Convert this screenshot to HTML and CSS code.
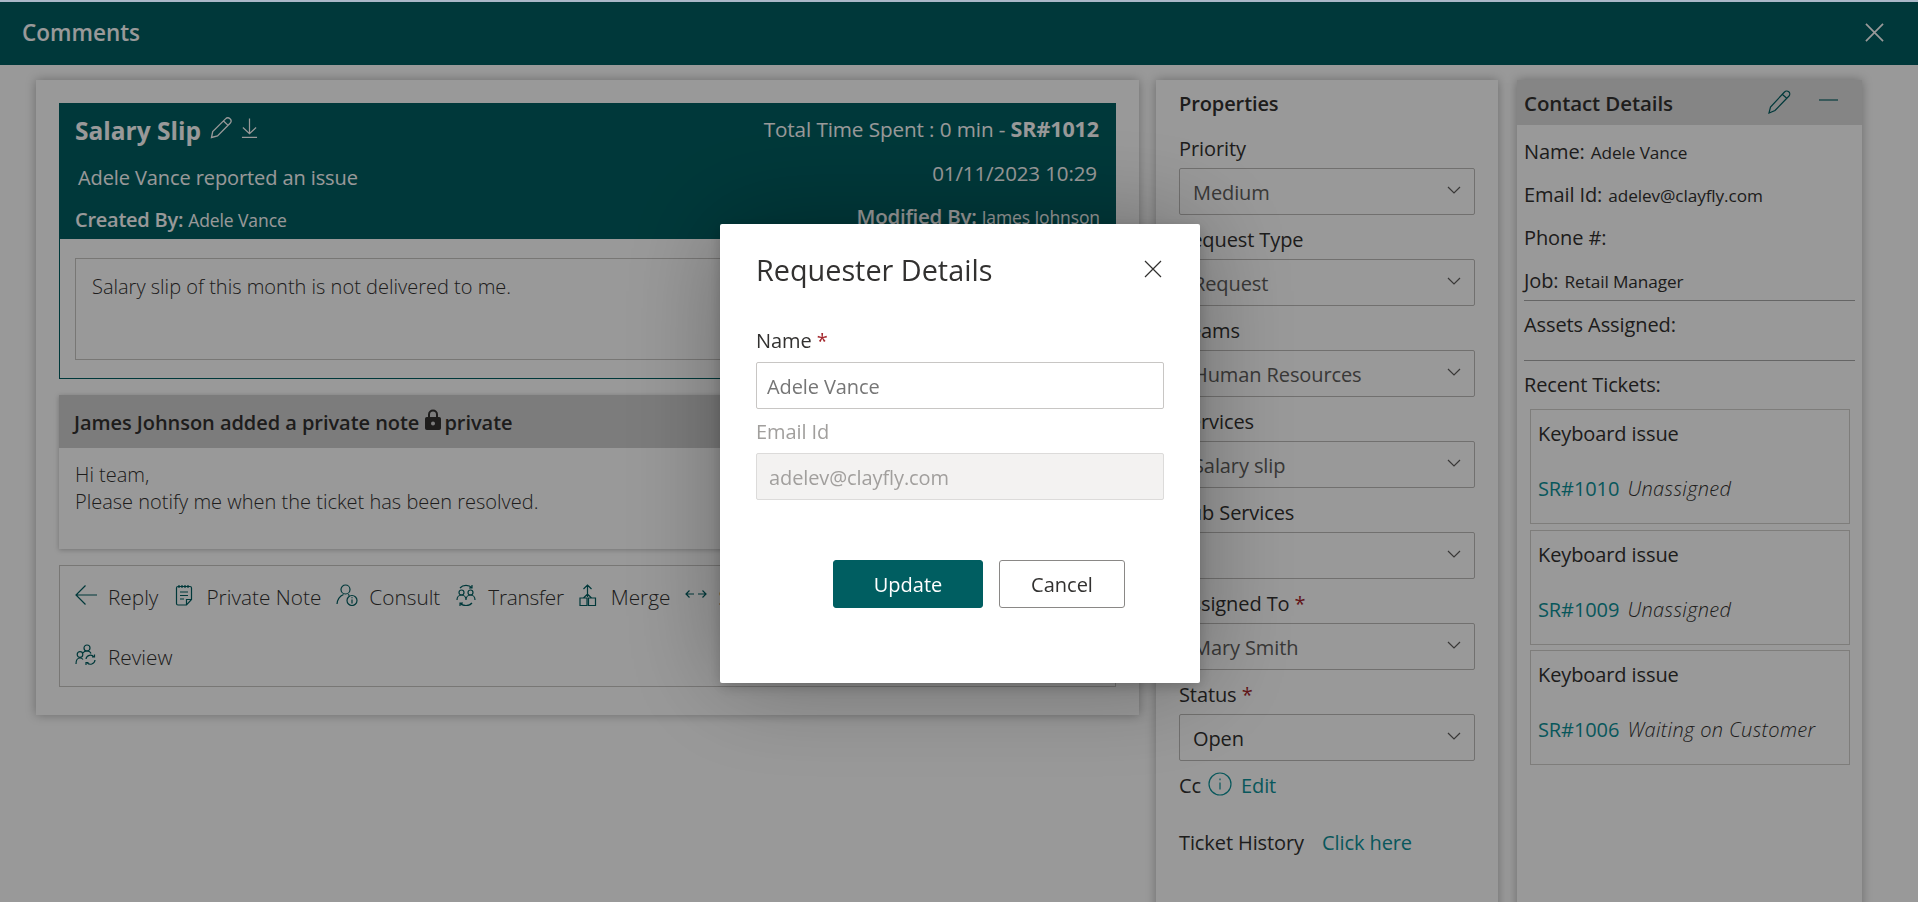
FILE: index.html
```html
<!DOCTYPE html>
<html>
<head>
    <meta charset="utf-8">
    <link rel="stylesheet" href="styles.css">
    <title>Comments</title>
</head>
<body>
    <div class="top-strip"></div>
    <header class="page-header">
        <span class="page-title">Comments</span>
        <svg class="page-close" viewBox="0 0 20 20"><path d="M1 1l18 18M19 1L1 19"/></svg>
    </header>

    <main class="page-main">
        <section class="ticket-card">
            <div class="ticket-head">
                <div class="ticket-row ticket-row-title">
                    <div class="ticket-name">
                        <strong>Salary Slip</strong>
                        <svg class="head-icon" viewBox="0 0 22 22"><path d="M1.500 20.500l1.200-6L15.500 1.900a2.800 2.800 0 0 1 4.600 4.400L7.500 19z M13.500 4l4.600 4.400"/></svg>
                        <svg class="head-icon head-icon-down" viewBox="0 0 18 22"><path d="M9 1v16M2 10.500L9 17l7-6.500M1 21h16"/></svg>
                    </div>
                    <div class="ticket-time">Total Time Spent : 0 min - <strong>SR#1012</strong></div>
                </div>
                <div class="ticket-row ticket-row-sub">
                    <span class="ticket-reported">Adele Vance reported an issue</span>
                    <span class="ticket-date">01/11/2023 10:29</span>
                </div>
                <div class="ticket-row ticket-row-by">
                    <span class="ticket-created"><b>Created By:</b> <small>Adele Vance</small></span>
                    <span class="ticket-modified"><b>Modified By:</b> <small>James Johnson</small></span>
                </div>
            </div>
            <div class="ticket-body">
                <div class="ticket-message">Salary slip of this month is not delivered to me.</div>
            </div>

            <div class="note">
                <div class="note-head">James Johnson added a private note <svg class="note-lock" viewBox="0 0 16 21"><path d="M3 8V5.500a5 5 0 0 1 10 0V8h1.200A1.800 1.800 0 0 1 16 9.800v9.400a1.800 1.800 0 0 1-1.800 1.800H1.800A1.800 1.800 0 0 1 0 19.200V9.800A1.800 1.800 0 0 1 1.800 8zm2 0h6V5.500a3 3 0 0 0-6 0zm3 4.500a2 2 0 1 0 0 4 2 2 0 0 0 0-4z" fill-rule="evenodd"/></svg>private</div>
                <div class="note-body">Hi team,<br>Please notify me when the ticket has been resolved.</div>
            </div>

            <div class="actions">
                <div class="action-row">
                    <span class="action">
                        <svg class="action-icon" viewBox="0 0 22 22"><path d="M1 11h21M10.500 1.500L1 11l9.500 9.500"/></svg>Reply
                    </span>
                    <span class="action">
                        <svg class="action-icon" viewBox="0 0 22 22"><path d="M5 2.500h12a1.500 1.500 0 0 1 1.500 1.500v11.500l-5 5.500H5a1.500 1.500 0 0 1-1.500-1.500V4A1.500 1.500 0 0 1 5 2.500zM6 1v3M9 1v3M12 1v3M15 1v3M7 8h8M7 11.500h8M7 15h4M18.500 15.500h-5v5.500"/></svg>Private Note
                    </span>
                    <span class="action">
                        <svg class="action-icon" viewBox="0 0 22 22"><circle cx="9.500" cy="5.500" r="4.500"/><path d="M1 20c.5-5 3-8 6.500-9.500M12 10.500l1.500 1"/><circle cx="16" cy="16.500" r="5"/><path d="M16 15.500v4M16 13.200v1"/></svg>Consult
                    </span>
                    <span class="action action-tight">
                        <svg class="action-icon" viewBox="0 0 22 22"><circle cx="6.500" cy="8.500" r="2.500"/><circle cx="15.500" cy="8.500" r="2.500"/><path d="M2 16c0-3 2-5 4.500-5s4.500 2 4.500 5M11 16c0-3 2-5 4.500-5s4.500 2 4.500 5M5 4c3-3.500 9-3.500 12 0M17 1v3h-3M17 19c-3 3.500-9 3.500-12 0M5 22v-3h3"/></svg>Transfer
                    </span>
                    <span class="action">
                        <svg class="action-icon" viewBox="0 0 22 22"><path d="M9.500 1v12M5.500 5l4-4 4 4M2 14h7v7.500H2zM10.500 14h7v7.500h-7zM5.500 14l4-4 4 4"/></svg>Merge
                    </span>
                    <span class="action">
                        <svg class="action-icon" viewBox="0 0 22 22"><path d="M1 10h8M4.500 6.500L1 10l3.500 3.500M13 10h8M17.500 6.500L21 10l-3.500 3.500"/></svg>Split
                    </span>
                </div>
                <div class="action-row">
                    <span class="action">
                        <svg class="action-icon" viewBox="0 0 22 22"><circle cx="12" cy="4" r="3"/><circle cx="5" cy="10.500" r="2.800"/><path d="M1 20c0-3.500 1.500-6 4-6 1.500 0 2.500.7 3 1.500M8 9c.5-1 2-2 4-2s3.500 1 4 2.500M20 16a4.500 4.500 0 0 1-8 2.500M11 15a4.500 4.500 0 0 1 8-2M19.500 10.500V13H17M11 21v-2.500h2.500"/></svg>Review
                    </span>
                </div>
            </div>
        </section>

        <aside class="properties">
            <h3 class="panel-title">Properties</h3>
            <div class="field-label">Priority</div>
            <div class="select">Medium<svg class="chevron" viewBox="0 0 14 8"><path d="M1 1l6 6 6-6"/></svg></div>
            <div class="field-label">Request Type</div>
            <div class="select">Request<svg class="chevron" viewBox="0 0 14 8"><path d="M1 1l6 6 6-6"/></svg></div>
            <div class="field-label">Teams</div>
            <div class="select">Human Resources<svg class="chevron" viewBox="0 0 14 8"><path d="M1 1l6 6 6-6"/></svg></div>
            <div class="field-label">Services</div>
            <div class="select">Salary slip<svg class="chevron" viewBox="0 0 14 8"><path d="M1 1l6 6 6-6"/></svg></div>
            <div class="field-label">Sub Services</div>
            <div class="select"><svg class="chevron" viewBox="0 0 14 8"><path d="M1 1l6 6 6-6"/></svg></div>
            <div class="field-label">Assigned To <span class="required">*</span></div>
            <div class="select">Mary Smith<svg class="chevron" viewBox="0 0 14 8"><path d="M1 1l6 6 6-6"/></svg></div>
            <div class="field-label">Status <span class="required">*</span></div>
            <div class="select select-dark">Open<svg class="chevron" viewBox="0 0 14 8"><path d="M1 1l6 6 6-6"/></svg></div>
            <div class="cc-row">
                Cc
                <svg class="cc-info" viewBox="0 0 24 24"><circle cx="12" cy="12" r="11"/><path d="M12 10.500v7M12 6.500v1.800"/></svg>
                <a class="link">Edit</a>
            </div>
            <div class="history-row">Ticket History <a class="link">Click here</a></div>
        </aside>

        <aside class="contact">
            <div class="contact-head">
                <span>Contact Details</span>
                <svg class="contact-edit" viewBox="0 0 24 24"><path d="M2 23l1.500-6L17.500 2a2.800 2.800 0 0 1 4.500 4L8 20.500z M15.500 4.500l4.500 4"/></svg>
                <svg class="contact-min" viewBox="0 0 20 2"><path d="M0 1h20"/></svg>
            </div>
            <div class="contact-list">
                <div class="contact-row"><b>Name:</b> <small>Adele Vance</small></div>
                <div class="contact-row"><b>Email Id:</b> <small>adelev@clayfly.com</small></div>
                <div class="contact-row"><b>Phone #:</b></div>
                <div class="contact-row contact-row-last"><b>Job:</b> <small>Retail Manager</small></div>
            </div>
            <div class="contact-block contact-assets"><b>Assets Assigned:</b></div>
            <div class="contact-block"><b>Recent Tickets:</b></div>
            <div class="recent">
                <div class="recent-card">
                    <div class="recent-title">Keyboard issue</div>
                    <div class="recent-line"><a class="link">SR#1010</a> <i>Unassigned</i></div>
                </div>
                <div class="recent-card">
                    <div class="recent-title">Keyboard issue</div>
                    <div class="recent-line"><a class="link">SR#1009</a> <i>Unassigned</i></div>
                </div>
                <div class="recent-card">
                    <div class="recent-title">Keyboard issue</div>
                    <div class="recent-line"><a class="link">SR#1006</a> <i>Waiting on Customer</i></div>
                </div>
            </div>
        </aside>
    </main>

    <div class="overlay"></div>

    <div class="modal">
        <div class="modal-head">
            <span class="modal-title">Requester Details</span>
            <svg class="modal-close" viewBox="0 0 18 18"><path d="M1 1l16 16M17 1L1 17"/></svg>
        </div>
        <div class="modal-label">Name <span class="required-bright">*</span></div>
        <div class="modal-input">Adele Vance</div>
        <div class="modal-label modal-label-off">Email Id</div>
        <div class="modal-input modal-input-off">adelev@clayfly.com</div>
        <div class="modal-actions">
            <button class="btn btn-primary">Update</button>
            <button class="btn btn-cancel">Cancel</button>
        </div>
    </div>
</body>
</html>
```

FILE: styles.css
```css
* {
    box-sizing: border-box;
}

html, body {
    height: 902px;
    overflow: hidden;
}

body {
    margin: 0;
    font-family: "Open Sans", "Noto Sans", sans-serif;
    font-size: 20px;
    letter-spacing: -0.1px;
    color: #323130;
    background-color: #ffffff;
}

svg {
    fill: none;
    stroke: currentColor;
    stroke-width: 1.2;
    flex: none;
}

a.link {
    color: #0e9299;
}

small {
    font-size: 17.5px;
}

/* header */
.top-strip {
    position: relative;
    z-index: 5;
    height: 2px;
    background-color: #aab8c8;
}

.page-header {
    height: 63px;
    padding: 0 34px 0 22px;
    display: flex;
    align-items: center;
    justify-content: space-between;
    background-color: #005e61;
    color: #ffffff;
}

.page-title {
    font-size: 22.500px;
    font-weight: 600;
    letter-spacing: 0;
    margin-top: -3px;
}

.page-close {
    width: 19px;
    height: 19px;
    margin-top: -2px;
    stroke-width: 1.800;
}

/* main columns */
.page-main {
    display: flex;
    align-items: flex-start;
    padding: 15px 0 0 36px;
}

.ticket-card {
    width: 1103px;
    height: 635px;
    padding: 23px;
    background-color: #ffffff;
    box-shadow: 0 0 10px rgba(0, 0, 0, 0.3);
}

.ticket-head {
    padding: 0 16px;
    background-color: #005e61;
    color: #ffffff;
}

.ticket-row {
    display: flex;
    align-items: center;
    justify-content: space-between;
}

.ticket-row-title {
    height: 54px;
}

.ticket-row-sub {
    height: 40px;
}

.ticket-row-by {
    height: 42px;
    padding-top: 4px;
}

.ticket-row-by b {
    font-weight: 600;
    letter-spacing: -0.25px;
}

.ticket-created {
    margin-top: -2px;
}

.ticket-modified {
    margin-top: -8px;
}

.ticket-modified b {
    font-size: 20.500px;
}

.ticket-name {
    display: flex;
    align-items: center;
}

.ticket-name strong {
    font-size: 24.500px;
    font-weight: 700;
    letter-spacing: 0;
}

.head-icon {
    width: 22px;
    height: 22px;
    margin-left: 9px;
    margin-top: -4px;
    stroke-width: 1.300;
}

.head-icon-down {
    width: 17px;
    margin-left: 9px;
}

.ticket-time {
    font-size: 20.700px;
    margin-top: -3px;
    margin-right: 1px;
}

.ticket-time strong {
    font-size: 21.500px;
    font-weight: 700;
}

.ticket-reported {
    margin-left: 3px;
}

.ticket-date {
    margin-bottom: 8px;
    margin-right: 3px;
    font-size: 20.500px;
}

.ticket-body {
    height: 140px;
    padding: 19px 15px 17px;
    border: 1px solid #005e61;
    border-top: 0;
}

.ticket-message {
    height: 102px;
    padding: 14px 16px;
    border: 1px solid #c8c6c4;
    font-weight: 300;
    letter-spacing: 0;
}

.note {
    margin-top: 16px;
    box-shadow: 0 1px 5px rgba(0, 0, 0, 0.25);
}

.note-head {
    height: 53px;
    padding: 1px 0 0 15px;
    line-height: 53px;
    background-color: #cfcfcf;
    font-weight: 600;
    letter-spacing: -0.05px;
}

.note-lock {
    width: 16px;
    height: 21px;
    margin-left: 1px;
    margin-right: 3px;
    fill: #323130;
    stroke: none;
}

.note-body {
    height: 101px;
    padding: 13px 16px;
    line-height: 27px;
    font-weight: 300;
    letter-spacing: 0;
}

.actions {
    height: 122px;
    margin-top: 16px;
    padding: 1px 15px;
    border: 1px solid #c8c6c4;
}

.action-row {
    height: 60px;
    display: flex;
    align-items: center;
    white-space: nowrap;
}

.action {
    display: flex;
    align-items: center;
    margin-right: 15px;
    font-size: 20.800px;
    font-weight: 300;
    letter-spacing: 0;
}

.action-tight {
    margin-right: 14px;
    letter-spacing: -0.3px;
}

.action-icon {
    width: 22px;
    height: 22px;
    margin-right: 11px;
    margin-top: -5px;
    color: #005e61;
}

/* properties */
.properties {
    width: 342px;
    height: 900px;
    margin-left: 17px;
    padding: 4px 23px;
    background-color: #ffffff;
    box-shadow: 0 0 10px rgba(0, 0, 0, 0.3);
}

.panel-title {
    height: 40px;
    margin: 0;
    line-height: 40px;
    font-size: 20px;
    font-weight: 600;
}

.field-label {
    height: 44px;
    padding-top: 6px;
    line-height: 38px;
    font-weight: 500;
}

.select {
    width: 296px;
    height: 47px;
    padding: 2px 13px 0;
    display: flex;
    align-items: center;
    justify-content: space-between;
    border: 1px solid #bdbbb9;
    border-radius: 2px;
    color: #605e5c;
}

.select .chevron {
    width: 14px;
    height: 8px;
    margin-left: auto;
    margin-top: -5px;
    color: #605e5c;
}

.select-dark {
    color: #323130;
}

.required {
    color: #a4262c;
}

.cc-row {
    height: 48px;
    display: flex;
    align-items: center;
    font-weight: 500;
}

.cc-info {
    width: 24px;
    height: 24px;
    margin: -3px 9px 0 7px;
    color: #0e9299;
}

.cc-row .link {
    font-weight: 400;
}

.history-row {
    height: 48px;
    margin-top: 10px;
    line-height: 48px;
    font-weight: 500;
}

.history-row .link {
    margin-left: 13px;
    font-weight: 400;
}

/* contact */
.contact {
    width: 345px;
    height: 900px;
    margin-left: 19px;
    background-color: #ffffff;
    box-shadow: 0 0 10px rgba(0, 0, 0, 0.3);
}

.contact-head {
    height: 45px;
    padding: 1px 24px 0 7px;
    display: flex;
    align-items: center;
    background-color: #dedede;
    font-size: 20.500px;
    font-weight: 600;
}

.contact-head span {
    margin-right: auto;
}

.contact-edit {
    width: 24px;
    height: 24px;
    color: #005e61;
    margin-top: -3px;
}

.contact-min {
    width: 19px;
    height: 2px;
    margin-left: 28px;
    margin-top: -7px;
    color: #005e61;
}

.contact-list {
    margin: 0 7px;
    padding-top: 5px;
    border-bottom: 1px solid #a8a8a8;
}

.contact b, .recent-title {
    font-weight: 500;
}

.contact-row {
    height: 43px;
    line-height: 43px;
}

.contact-row small {
    font-size: 17.200px;
    margin-left: 1px;
}

.contact-row-last {
    height: 41px;
}

.contact-block {
    margin: 0 7px;
    line-height: 48px;
    height: 48px;
}

.contact-assets {
    height: 60px;
    border-bottom: 1px solid #a8a8a8;
}

.recent {
    margin: 0 12px 0 13px;
    display: flex;
    flex-direction: column;
    gap: 5.500px;
}

.recent-card {
    height: 115px;
    padding-left: 7px;
    border: 1px solid #d2d0ce;
}

.recent-title {
    height: 47px;
    line-height: 47px;
}

.recent-line {
    margin-top: 8px;
    line-height: 48px;
    white-space: nowrap;
}

.recent-line i {
    margin-left: 3px;
    font-weight: 300;
    letter-spacing: 0.35px;
}

/* modal */
.overlay {
    position: fixed;
    inset: 0;
    z-index: 2;
    background-color: rgba(0, 0, 0, 0.4);
}

.modal {
    position: fixed;
    z-index: 3;
    left: 720px;
    top: 224px;
    width: 480px;
    height: 459px;
    padding: 20px 36px 0 36px;
    border-radius: 2px;
    background-color: #ffffff;
    box-shadow: 0 0 100px rgba(0, 0, 0, 0.3), 0 4px 14px rgba(0, 0, 0, 0.2);
}

.modal-head {
    height: 48px;
    padding-top: 2px;
    display: flex;
    align-items: center;
    justify-content: space-between;
}

.modal-title {
    font-size: 28.800px;
    font-weight: 500;
    letter-spacing: 0;
}

.modal-close {
    width: 18px;
    height: 18px;
    margin-right: 2px;
}

.modal-label {
    height: 44px;
    line-height: 46px;
    font-weight: 500;
}

.modal-head + .modal-label {
    margin-top: 26px;
}

.modal-label-off {
    color: #a19f9d;
}

.required-bright {
    color: #a4262c;
}

.modal-input {
    height: 47px;
    padding: 2px 10px 0;
    display: flex;
    align-items: center;
    border: 1px solid #c8c6c4;
    border-radius: 2px;
    color: #767676;
}

.modal-input-off {
    background-color: #f3f2f1;
    border-color: #dcdbda;
    color: #a19f9d;
    padding-left: 12px;
}

.modal-actions {
    display: flex;
    gap: 16px;
    margin-top: 60px;
    padding-left: 77px;
}

.btn {
    height: 48px;
    padding-top: 2px;
    border: 1px solid #8a8886;
    border-radius: 3px;
    background-color: #ffffff;
    color: #323130;
    font-family: inherit;
    font-size: 20px;
    font-weight: 500;
    letter-spacing: 0;
}

.btn-cancel {
    width: 126px;
}

.btn-primary {
    width: 150px;
    border-color: #005e61;
    background-color: #005e61;
    color: #ffffff;
}
```
